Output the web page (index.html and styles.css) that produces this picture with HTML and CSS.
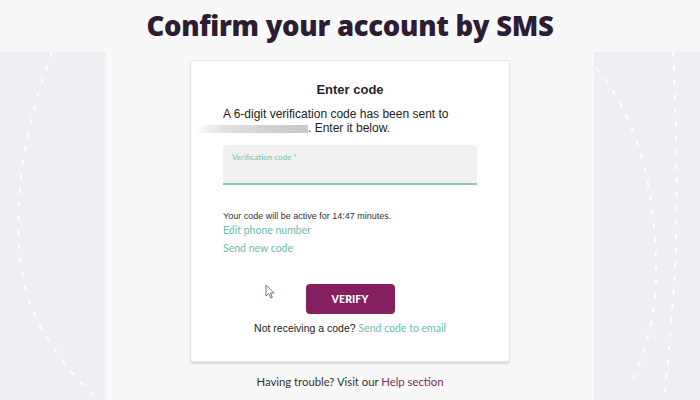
FILE: index.html
```html
<!DOCTYPE html>
<html lang="en">
<head>
<meta charset="utf-8">
<title>Confirm your account by SMS</title>
<link rel="stylesheet" href="styles.css">
</head>
<body>
<div class="page">
  <header class="header">
    <h1 class="title">Confirm your account by SMS</h1>
  </header>
  <div class="main">
    <aside class="side side-left">
      <svg class="deco" width="106" height="348" viewBox="0 0 106 348">
        <path d="M52 0 C 30 60, 10 140, 22 220 C 32 280, 70 320, 98 348" fill="none" stroke="#fff" stroke-width="2" stroke-dasharray="5 9"/>
      </svg>
    </aside>
    <main class="center">
      <section class="card">
        <h2 class="card-title">Enter code</h2>
        <p class="intro">A 6-digit verification code has been sent to<br><span class="line2"><span class="blur"></span>. Enter it below.</span></p>
        <div class="field">
          <span class="field-label">Verification code *</span>
        </div>
        <p class="timer">Your code will be active for 14:47 minutes.</p>
        <a class="link link-edit" href="#">Edit phone number</a>
        <a class="link link-send" href="#">Send new code</a>
        <div class="actions">
          <button class="verify" type="button">VERIFY</button>
          <svg class="cursor" width="12" height="16" viewBox="0 0 12 16">
            <path d="M1 1 L1 12 L3.8 9.6 L5.8 14 L7.4 13.3 L5.5 9 L9.2 9 Z" fill="#fff" stroke="#6a7a80" stroke-width="1"/>
          </svg>
        </div>
        <p class="alt">Not receiving a code? <a class="link-inline" href="#">Send code to email</a></p>
      </section>
      <p class="help">Having trouble? Visit our <a class="help-link" href="#">Help section</a></p>
    </main>
    <aside class="side side-right">
      <svg class="deco" width="106" height="348" viewBox="0 0 106 348">
        <path d="M2 16 C 40 60, 62 130, 62 220 C 62 270, 50 300, 38 330" fill="none" stroke="#fff" stroke-width="2" stroke-dasharray="5 9"/>
        <path d="M79 0 C 84 100, 84 200, 78 260 C 75 300, 72 330, 70 348" fill="none" stroke="#fff" stroke-width="2" stroke-dasharray="5 9"/>
      </svg>
    </aside>
  </div>
</div>
</body>
</html>
```

FILE: styles.css
```css
* { box-sizing: border-box; }
html, body { margin: 0; padding: 0; }
body {
  width: 700px;
  height: 400px;
  overflow: hidden;
  background: #f8f8f9;
  font-family: "Liberation Sans", Arial, sans-serif;
}
.page { width: 700px; height: 400px; display: flex; flex-direction: column; }
.header {
  height: 52px;
  display: flex;
  align-items: center;
  justify-content: center;
}
.title {
  margin: 0;
  font-family: "Open Sans", sans-serif;
  font-weight: 800;
  font-size: 27.5px;
  line-height: 34px;
  color: #2e1c33;
  letter-spacing: -0.3px;
}
.main {
  flex: 1;
  display: grid;
  grid-template-columns: 106px 1fr 106px;
}
.side {
  background: #efeef3;
  position: relative;
  overflow: hidden;
}
.deco { display: block; }
.center {
  display: flex;
  flex-direction: column;
  align-items: center;
}
.card {
  margin-top: 8px;
  width: 320px;
  height: 302px;
  background: #fff;
  border: 1px solid #e6e6e8;
  border-radius: 3px;
  box-shadow: 0 2px 2px rgba(0,0,0,0.12);
  padding: 21px 32px 0 32px;
  display: flex;
  flex-direction: column;
}
.card-title {
  margin: 0;
  text-align: center;
  font-size: 13px;
  line-height: 16px;
  font-weight: bold;
  color: #2a1f2d;
}
.intro {
  margin: 9px 0 0 0;
  font-size: 12px;
  line-height: 14px;
  color: #222;
}
.line2 { display: inline-block; margin-left: -29px; }
.blur {
  display: inline-block;
  width: 114px;
  height: 8px;
  vertical-align: -1px;
  background: linear-gradient(90deg, rgba(200,200,200,0) 0%, #e2e2e2 25%, #d3d3d3 60%, #c8c8c8 100%);
  filter: blur(0.6px);
}
.field {
  margin-top: 10px;
  height: 40px;
  width: 254px;
  background: #f1f1f2;
  border-radius: 4px 4px 0 0;
  border-bottom: 2px solid #86c9bd;
  padding: 7px 9px 0 9px;
}
.field-label {
  display: block;
  font-family: "Lato", sans-serif;
  font-size: 8px;
  line-height: 10px;
  color: #72c0b2;
}
.timer {
  margin: 25px 0 0 0;
  font-size: 9px;
  line-height: 12px;
  color: #333;
}
.link {
  display: block;
  font-family: "Lato", sans-serif;
  font-size: 10.5px;
  line-height: 14px;
  color: #6bbcae;
  text-decoration: none;
}
.link-edit { margin-top: 1px; }
.link-send { margin-top: 4px; }
.actions {
  margin-top: 29px;
  display: flex;
  justify-content: center;
  position: relative;
}
.verify {
  width: 89px;
  height: 30px;
  border: none;
  border-radius: 4px;
  background: #84205f;
  color: #fff;
  font-family: "Lato", sans-serif;
  font-weight: 900;
  font-size: 10.5px;
  letter-spacing: 0.1px;
  padding: 0;
}
.cursor { position: absolute; left: 42px; top: 0; }
.alt {
  margin: 7px 0 0 0;
  text-align: center;
  font-size: 10.5px;
  line-height: 14px;
  color: #222;
}
.link-inline {
  font-family: "Lato", sans-serif;
  color: #6bbcae;
  text-decoration: none;
}
.help {
  margin: 13px 0 0 0;
  font-family: "Lato", sans-serif;
  font-size: 11.3px;
  line-height: 14px;
  color: #333;
  text-align: center;
}
.help-link { color: #7b2d5e; text-decoration: none; }
```
